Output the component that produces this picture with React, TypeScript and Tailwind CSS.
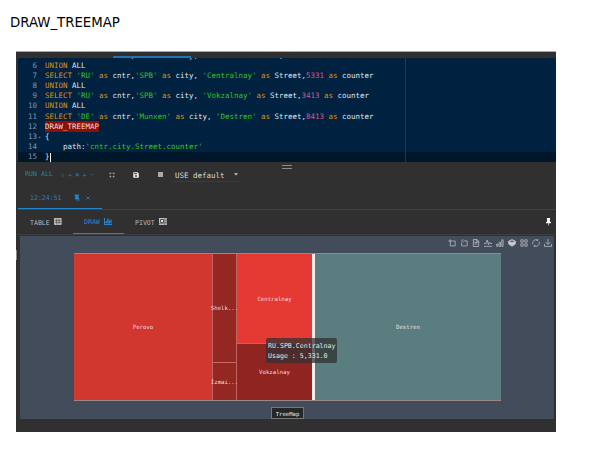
import type { ReactNode } from "react";

const Kw = ({ children }: { children: ReactNode }) => <span className="text-[#d9931a]">{children}</span>;
const Str = ({ children }: { children: ReactNode }) => <span className="text-[#35c424]">{children}</span>;
const Num = ({ children }: { children: ReactNode }) => <span className="text-[#d6588a]">{children}</span>;

type SelectProps = { country: string; city: string; street: string; value: number };

const Select = ({ country, city, street, value }: SelectProps) => (
	<>
		<Kw>SELECT</Kw> <Str>'{country}'</Str> <Kw>as</Kw> cntr,<Str>'{city}'</Str> <Kw>as</Kw> city, <Str>'{street}'</Str>{" "}
		<Kw>as</Kw> Street,<Num>{value}</Num> <Kw>as</Kw> counter
	</>
);

const Union = () => (
	<>
		<Kw>UNION</Kw> ALL
	</>
);

const lines: ReactNode[] = [
	<Select country="RU" city="MSK" street="Izmai" value={3311} />,
	<Union />,
	<Select country="RU" city="SPB" street="Centralnay" value={5331} />,
	<Union />,
	<Select country="RU" city="SPB" street="Vokzalnay" value={3413} />,
	<Union />,
	<Select country="DE" city="Munxen" street="Destren" value={8413} />,
	<span className="bg-[#8c0f08] text-[#f0dcdc] py-[1px]">DRAW_TREEMAP</span>,
	"{",
	<>
		{"    "}path:<Str>'cntr.city.Street.counter'</Str>
	</>,
	"}",
];

const Editor = () => (
	<div className="relative ml-[2px] h-[104px] overflow-hidden bg-[#002240] text-[7.475px] text-[#dfe7ee]">
		<div className="-mt-[7.6px]">
			{lines.map((line, i) => (
				<div
					key={i}
					className={`flex h-[10.2px] leading-[10.2px] whitespace-pre ${i === 0 ? "pt-[0.6px]" : ""} ${i === 10 ? "bg-[#00162a]" : ""}`}
				>
					<span className="w-[19px] text-right text-[#8297a8]">{i + 5}</span>
					<span className="w-[8px] pl-[1px] text-[5px] text-[#6f8596]">{i === 8 ? "▾" : ""}</span>
					<span>{line}</span>
					{i === 10 && <span className="mt-[1px] h-[9px] w-[1px] bg-white" />}
				</div>
			))}
		</div>
		<div className="absolute top-0 left-[387px] h-full w-[1px] bg-[#1b3a50]" />
	</div>
);

const Toolbar = () => (
	<div className="flex h-[25px] items-center pl-[9px] text-[6.65px] text-[#2b7fc4]">
		<span className="flex w-[84px] items-center gap-[4px] pt-[1px] whitespace-pre">
			RUN ALL <span className="text-[6px]">⇧ + ⌘ + ⏎</span>
		</span>
		<svg className="w-[6px] h-[6px] mr-[18px] text-[#c8c8c8]" viewBox="0 0 6 6" fill="none" stroke="currentColor" strokeWidth=".9">
			<path d="M1 2.2V1.2H2.3M3.7 1.2H5V2.2M5 3.8V4.8H3.7M2.3 4.8H1V3.8" />
		</svg>
		<svg className="w-[6px] h-[6px] mr-[19px]" viewBox="0 0 6 6">
			<path d="M.3.3H4.6L5.8 1.5V5.8H.3Z" fill="#f0f0f0" />
			<path d="M1.2 1.2H3.9V2.2H1.2Z" fill="#303030" />
			<circle cx="3" cy="4" r=".9" fill="#303030" />
		</svg>
		<span className="w-[5px] h-[5px] bg-[#aaaaaa]" />
		<div className="ml-[11px] flex h-[14px] w-[66px] items-center justify-between border-b border-[#3c3c3c] pl-[1px] pr-[2px] text-[7.475px] text-[#d8d8d8]">
			<span className="pt-[3px]">USE default</span>
			<svg className="mt-[1px] w-[4px] h-[3px]" viewBox="0 0 4 3">
				<path d="M0 .3H4L2 2.5Z" fill="#cccccc" />
			</svg>
		</div>
	</div>
);

const QueryTabs = () => (
	<div className="ml-[2px] flex h-[23px] border-b border-[#424242] text-[6.55px] text-[#2384cf]">
		<div className="flex h-[22px] w-[84px] items-center border-b border-[#2384cf] pl-[12px]">
			<span className="pt-[3px]">12:24:51</span>
			<svg className="ml-[12px] w-[6px] h-[8px]" viewBox="0 0 6 8">
				<path d="M1 .5H5V1.4H4.5V3.4L5.4 4.6V5.2H3.4V7.5H2.7V5.2H.7V4.6L1.5 3.4V1.4H1Z" fill="#2384cf" />
				<path d="M0 .7L5.7 7" stroke="#2384cf" strokeWidth=".7" />
			</svg>
			<svg className="ml-[6px] mt-[1px] w-[4px] h-[4px]" viewBox="0 0 4 4" stroke="#2384cf" strokeWidth=".8">
				<path d="M.4.4L3.6 3.6M3.6.4L.4 3.6" />
			</svg>
		</div>
	</div>
);

const TableIcon = () => (
	<svg className="-mt-[1px] w-[8px] h-[7px]" viewBox="0 0 8 7">
		<rect width="7.6" height="7" rx=".7" fill="#bcbcbc" />
		<path d="M.6 2.3H7M.6 4.4H7M2.7 .8V6.4M5 .8V6.4" stroke="#303030" strokeWidth=".5" />
	</svg>
);

const BarsIcon = () => (
	<svg className="-mt-[1px] w-[8px] h-[7px]" viewBox="0 0 8 7" fill="#2384cf">
		<path d="M0 0H1V6H8V7H0ZM1.5 3H2.9V5.6H1.5ZM3.2.6H4.6V5.6H3.2ZM4.9 2.5H6V5.6H4.9ZM6.3 1.5H7.6V5.6H6.3Z" />
	</svg>
);

const PivotIcon = () => (
	<svg className="-mt-[1px] w-[8px] h-[7px]" viewBox="0 0 8 7">
		<rect width="7.8" height="7" fill="#c4c4c4" />
		<path d="M1.5 1.5H4.5V4.5H1.5Z" fill="#e0e0e0" stroke="#303030" strokeWidth=".8" />
		<path d="M5.8 0V7M5.8 2.3H8M5.8 4.6H8M0 5.7H5.8" stroke="#303030" strokeWidth=".5" />
	</svg>
);

const ViewTabs = () => (
	<div className="ml-[2px] flex h-[25px] border-b border-[#3d3d3d] text-[6.55px] text-[#b8b8b8]">
		<div className="flex w-[55px] items-center gap-[4px] pl-[12px]"><span className="pt-[3px]">TABLE</span> <TableIcon /></div>
		<div className="flex h-[24px] w-[51px] items-center gap-[4px] border-b border-[#2384cf] pl-[11px] text-[#2384cf]"><span className="pt-[3px]">DRAW</span> <BarsIcon /></div>
		<div className="flex flex-1 items-center gap-[4px] pl-[11px]"><span className="pt-[3px]">PIVOT</span> <PivotIcon /></div>
		<svg className="mt-[8px] mr-[5px] w-[5px] h-[8px]" viewBox="0 0 5 8" fill="#ffffff">
			<path d="M.8 0H4.2V.8H3.9V3.3L5 4.5V5.2H2.8V7.5H2.2V5.2H0V4.5L1.1 3.3V.8H.8Z" />
		</svg>
	</div>
);

const tools = [
	"M2.3 .3V6.9H7.2V2H.3",
	"M3.5 1.9H7.2V6.9H1.6V3.6M3.2 .2L1.5 1.9L3.2 3.6",
	"M1.3.5H5L6.7 2.2V7.5H1.3ZM2.5 3.5H5.5M2.5 5H5.5M4.7.5V2.5H6.7M2.5 2H3.5",
	"M0 4.5H2L3.2 1L4.5 5.6L5.5 3.2L6.2 4.5H8M0 7.3H8",
	"M.7 7.4V5H2V7.4ZM3.2 7.4V3.2H4.5V7.4ZM5.8 7.4V.8H7.1V7.4Z",
	"",
	"M.8.8H3.2V3.2H.8ZM4.8.8H7.2V3.2H4.8ZM.8 4.8H3.2V7.2H.8ZM4.8 4.8H7.2V7.2H4.8Z",
	"M.8 5.2A3.4 3.4 0 0 1 5.8 1.2M7.2 2.8A3.4 3.4 0 0 1 2.2 6.8M5.9.1V1.5H4.5M2.1 7.9V6.5H3.5",
	"M4 0V5.2M1.8 3.2L4 5.4L6.2 3.2M.5 5V7.4H7.5V5",
];

const ChartTools = () => (
	<div className="flex gap-[4px] justify-end pt-[3px] pr-[2px]">
		{tools.map((d, i) => (
			<svg key={i} className="w-[8px] h-[8px]" viewBox="0 0 8 8" fill="none" stroke="#bfc2c7" strokeWidth=".75">
				{d ? <path d={d} /> : <path d="M.5 2.3L4 .5L7.5 2.3V5L4 7.3L.5 5Z" fill="#c9cbcf" />}
				{!d && <path d="M1.5 2.4L4 1.2L6.5 2.4L4 3.6Z" fill="#6b7380" stroke="none" />}
			</svg>
		))}
	</div>
);

const cell = "flex items-center justify-center whitespace-nowrap pt-[1px]";

const TreeMap = () => (
	<div className="relative ml-[54px] mt-[6px] flex h-[149px] w-[427px] border-y border-[#9a8587] text-[5.7px] text-[#f3dcdc]">
		<div className={`${cell} w-[138px] bg-[#d1362f]`}>Perovo</div>
		<div className="flex w-[25px] flex-col border-x border-[#bf6662] bg-[#952722]">
			<div className={`${cell} h-[109px] border-b border-[#c76a66]`}>Shelk...</div>
			<div className={`${cell} flex-1`}>Izmai...</div>
		</div>
		<div className="flex w-[75px] flex-col">
			<div className={`${cell} h-[90px] border-b border-[#cf5c57] bg-[#e53a33]`}>Centralnay</div>
			<div className={`${cell} flex-1 bg-[#8f2420]`}>Vokzalnay</div>
		</div>
		<div className="w-[3px] bg-[#f6efee]" />
		<div className={`${cell} flex-1 bg-[#5a7d80]`}>Destren</div>
		<div className="absolute left-[192px] top-[84px] h-[25px] w-[71px] rounded-[2px] bg-[#323232]/75 pl-[2px] pt-[3px] text-[6.6px] leading-[10.2px] text-[#e8e8e8]">
			<p className="whitespace-nowrap">RU.SPB.Centralnay</p>
			<p className="whitespace-nowrap">Usage : 5,331.0</p>
		</div>
	</div>
);

const Chart = () => (
	<div className="ml-[4px] mt-[1px] mr-[2px] flex h-[183px] flex-col bg-[#434c5a]">
		<ChartTools />
		<TreeMap />
		<div className="ml-[251px] mt-[6px] flex h-[12px] w-[33px] shrink-0 items-center justify-center border border-[#777777] bg-[#252628] pt-[2px] text-[5.6px] text-[#e8e8e8]">
			TreeMap
		</div>
	</div>
);

const App = () => {
	return (
		<div className="h-[450px] w-[600px] overflow-hidden bg-white font-['DejaVu_Sans',sans-serif]">
			<h1 className="h-[51px] pl-[10px] pt-[14px] text-[13.3px] leading-[18px] text-black">DRAW_TREEMAP</h1>
			<div className="relative ml-[16px] h-[381px] w-[540px] bg-[#303030] font-['DejaVu_Sans_Mono',monospace]">
				<div className="flex h-[7px] items-end border-t border-[#aaaaaa] pl-[97px]">
					<div className="h-[2px] w-[78px] bg-[#2272ae]" />
				</div>
				<Editor />
				<Toolbar />
				<QueryTabs />
				<ViewTabs />
				<Chart />
				{/* splitter grip */}
				<div className="absolute left-[266px] top-[114px] h-[4px] w-[10px] border-y border-[#8a8a8a]" />
				<div className="absolute left-0 top-[199px] h-[10px] w-[1px] bg-[#888888]" />
			</div>
		</div>
	);
};

export default App;
